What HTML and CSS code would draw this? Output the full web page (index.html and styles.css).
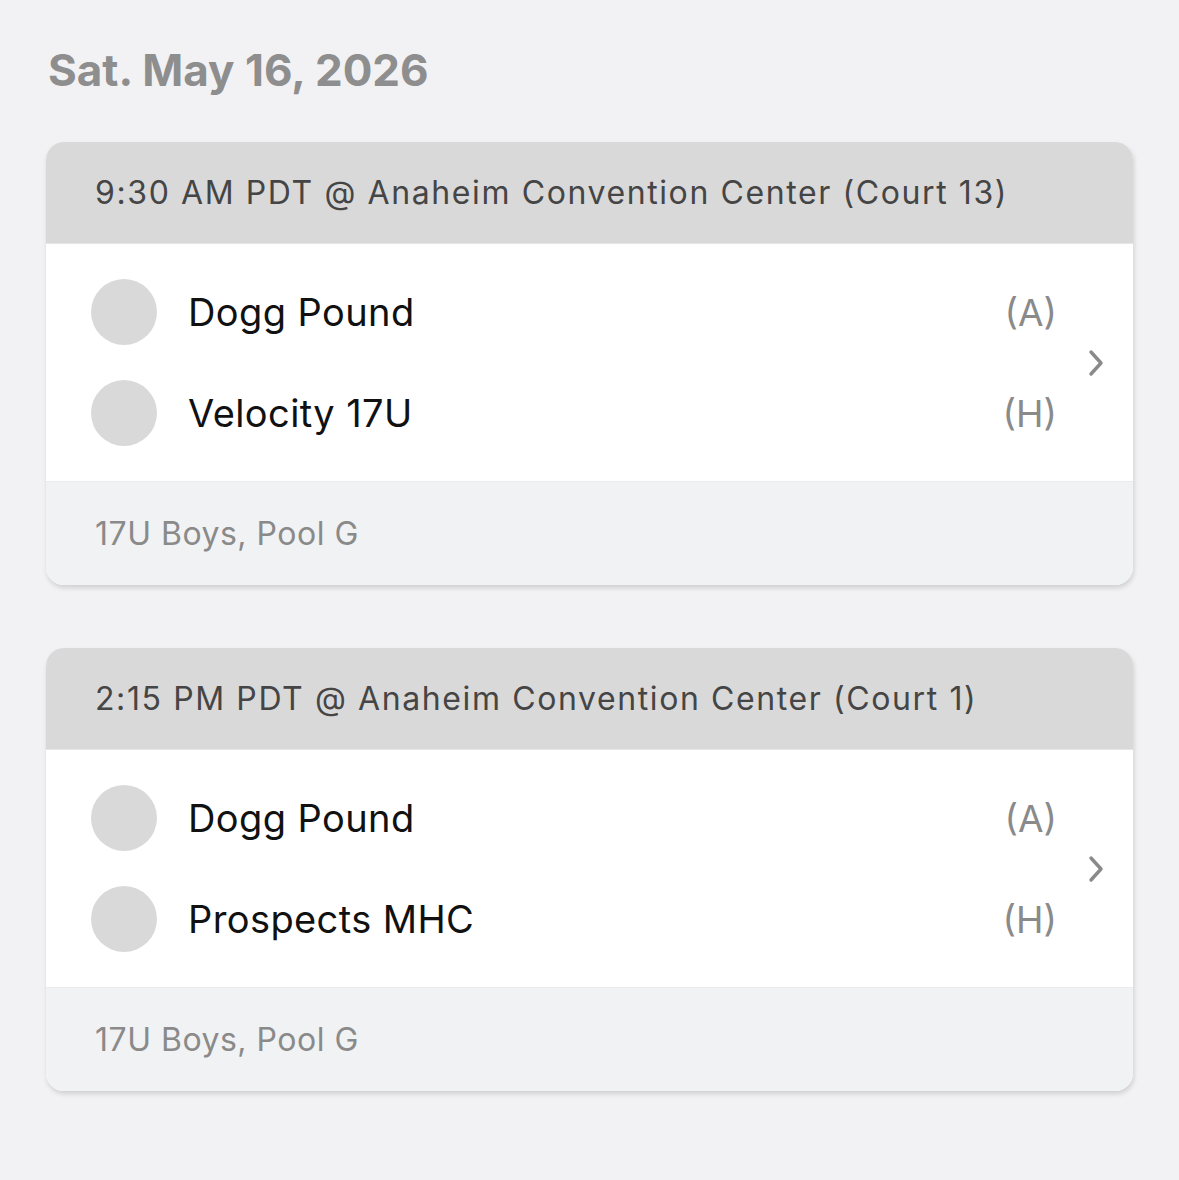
FILE: index.html
```html
<!DOCTYPE html>
<html lang="en">
<head>
  <meta charset="UTF-8">
  <title>Schedule</title>
  <link rel="stylesheet" href="styles.css">
</head>
<body>

  <h1 class="day-title">Sat. May 16, 2026</h1>

  <div class="game-list">

    <div class="game-card">
      <div class="game-head">9:30 AM PDT @ Anaheim Convention Center (Court 13)</div>
      <div class="game-body">
        <div class="teams">
          <div class="team-row">
            <span class="team-logo"></span>
            <span class="team-name">Dogg Pound</span>
            <span class="team-side">(A)</span>
          </div>
          <div class="team-row">
            <span class="team-logo"></span>
            <span class="team-name">Velocity 17U</span>
            <span class="team-side">(H)</span>
          </div>
        </div>
        <svg class="chevron" width="16" height="28" viewBox="0 0 16 28">
          <path d="M3 3 L13 14 L3 25" fill="none" stroke="#8a8a8a" stroke-width="3.4" stroke-linecap="round" stroke-linejoin="round"/>
        </svg>
      </div>
      <div class="game-foot">17U Boys, Pool G</div>
    </div>

    <div class="game-card">
      <div class="game-head">2:15 PM PDT @ Anaheim Convention Center (Court 1)</div>
      <div class="game-body">
        <div class="teams">
          <div class="team-row">
            <span class="team-logo"></span>
            <span class="team-name">Dogg Pound</span>
            <span class="team-side">(A)</span>
          </div>
          <div class="team-row">
            <span class="team-logo"></span>
            <span class="team-name">Prospects MHC</span>
            <span class="team-side">(H)</span>
          </div>
        </div>
        <svg class="chevron" width="16" height="28" viewBox="0 0 16 28">
          <path d="M3 3 L13 14 L3 25" fill="none" stroke="#8a8a8a" stroke-width="3.4" stroke-linecap="round" stroke-linejoin="round"/>
        </svg>
      </div>
      <div class="game-foot">17U Boys, Pool G</div>
    </div>

  </div>

</body>
</html>
```

FILE: styles.css
```css
body {
  font-family: "Inter", "Noto Sans", sans-serif;
  margin: 0;
  padding: 38px 46px 40px;
  background-color: #f2f2f4;
}

.day-title {
  margin: 0 0 40px 2px;
  font-size: 44px;
  font-weight: 700;
  color: #8e8e8e;
  line-height: 64px;
}

.game-list {
  display: flex;
  flex-direction: column;
  gap: 63px;
}

.game-card {
  border-radius: 18px;
  overflow: hidden;
  background-color: white;
  box-shadow: 1px 3px 5px rgba(0, 0, 0, 0.14);
}

.game-head {
  height: 102px;
  display: flex;
  align-items: center;
  padding-left: 49px;
  background-color: #d9d9d9;
  border-bottom: 1px solid #e6e6e6;
  box-sizing: border-box;
  font-size: 32px;
  letter-spacing: 1.6px;
  color: #454545;
}

.game-body {
  display: flex;
  align-items: center;
  padding: 35px 29px 35px 45px;
  background-color: white;
}

.teams {
  flex: 1;
  display: flex;
  flex-direction: column;
  gap: 35px;
  padding-right: 31px;
}

.team-row {
  display: flex;
  align-items: center;
  height: 66px;
}

.team-logo {
  width: 66px;
  height: 66px;
  border-radius: 50%;
  background-color: #d9d9d9;
  margin-right: 31px;
}

.team-name {
  flex: 1;
  font-size: 38px;
  letter-spacing: 0.4px;
  color: #111;
}

.team-side {
  font-size: 37px;
  color: #8a8a8a;
}

.game-foot {
  height: 104px;
  display: flex;
  align-items: center;
  padding-left: 49px;
  background-color: #f1f2f4;
  border-top: 1px solid #ebebed;
  box-sizing: border-box;
  font-size: 32px;
  letter-spacing: 0.5px;
  color: #8a8a8a;
}
```
